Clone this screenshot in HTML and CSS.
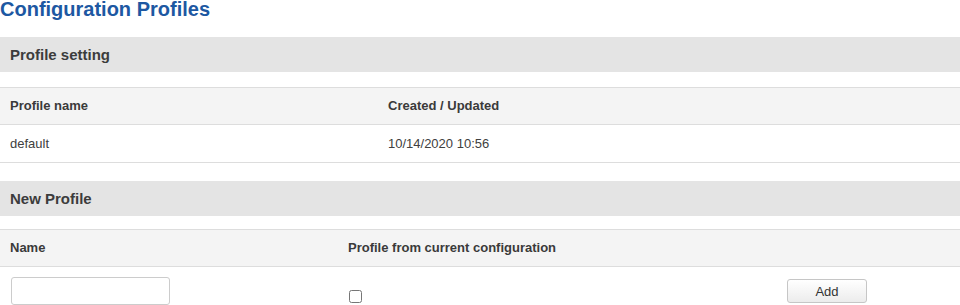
FILE: index.html
```html
<!DOCTYPE html>
<html>
<head>
<meta charset="utf-8">
<link rel="stylesheet" href="styles.css">
</head>
<body>
<h1 class="page-title">Configuration Profiles</h1>

<section class="section">
  <div class="band">Profile setting</div>
  <div class="table cols-profiles">
    <div class="row head">
      <div class="cell">Profile name</div>
      <div class="cell">Created / Updated</div>
    </div>
    <div class="row">
      <div class="cell">default</div>
      <div class="cell">10/14/2020 10:56</div>
    </div>
  </div>
</section>

<section class="section section-new">
  <div class="band">New Profile</div>
  <div class="table cols-new">
    <div class="row head">
      <div class="cell">Name</div>
      <div class="cell">Profile from current configuration</div>
      <div class="cell"></div>
    </div>
    <div class="row form-row">
      <div class="cell"><input class="text-input" type="text"></div>
      <div class="cell"><input class="check" type="checkbox"></div>
      <div class="cell"><button class="btn" type="button">Add</button></div>
    </div>
  </div>
</section>
</body>
</html>
```

FILE: styles.css
```css
* { box-sizing: border-box; }

html, body {
  margin: 0;
  padding: 0;
  background: #ffffff;
}

body {
  font-family: "Liberation Sans", Arial, sans-serif;
  font-size: 13px;
  color: #404040;
  width: 960px;
  overflow: hidden;
}

.page-title {
  margin: 0 0 19px 0;
  font-size: 20px;
  line-height: 18px;
  font-weight: bold;
  color: #1d58a2;
}

.section-new {
  margin-top: 18px;
}

.band {
  height: 35px;
  display: flex;
  align-items: center;
  padding: 0 10px;
  background: #e4e4e4;
  font-size: 15px;
  font-weight: bold;
  color: #3c3c3c;
}

.table {
  margin-top: 15px;
  border-top: 1px solid #dddddd;
}

.section-new .table {
  margin-top: 13px;
}

.row {
  display: grid;
  border-bottom: 1px solid #dddddd;
}

.cols-profiles .row { grid-template-columns: 378px 1fr; }
.cols-new .row { grid-template-columns: 338px 439px 1fr; }

.cell {
  padding: 10px 10px 11px;
  line-height: 15px;
  min-height: 36px;
}

.row.head {
  background: #f4f4f4;
  font-weight: bold;
  color: #3a3a3a;
}

.cols-profiles .row:not(.head) .cell {
  padding: 11px 10px 11px;
}

.form-row {
  border-bottom: none;
}

.form-row .cell {
  padding: 10px 10px 0;
}

.text-input {
  display: block;
  margin: 0 0 0 1px;
  width: 159px;
  height: 28px;
  border: 1px solid #cccccc;
  border-radius: 3px;
  background: #ffffff;
  font: inherit;
  padding: 0 6px;
}

.check {
  display: block;
  margin: 13px 0 0 1px;
  width: 13px;
  height: 13px;
}

.btn {
  display: block;
  margin: 2px 0 0 0;
  width: 80px;
  height: 24px;
  border: 1px solid #c6c6c6;
  border-radius: 3px;
  background: linear-gradient(#ffffff, #ececec);
  font-family: "Liberation Sans", Arial, sans-serif;
  font-size: 13px;
  color: #333333;
  padding: 0;
}
```
